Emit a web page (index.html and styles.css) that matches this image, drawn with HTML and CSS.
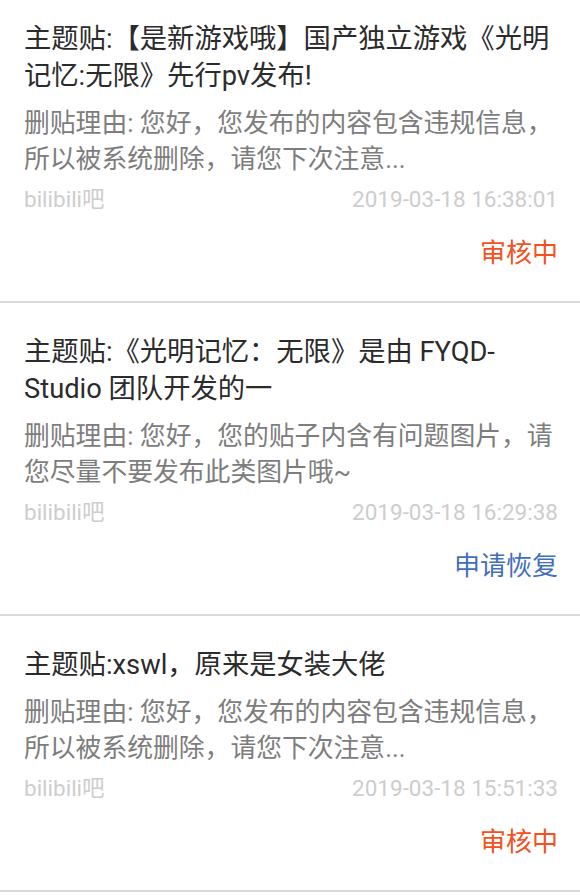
FILE: index.html
```html
<!DOCTYPE html>
<html lang="zh-CN">
<head>
<meta charset="utf-8">
<title>删帖记录</title>
<link rel="stylesheet" href="styles.css">
</head>
<body>
<ul class="list">
  <li class="item">
    <div class="title">主题贴:【是新游戏哦】国产独立游戏《光明记忆:无限》先行pv发布!</div>
    <div class="reason">删贴理由: 您好，您发布的内容包含违规信息，所以被系统删除，请您下次注意...</div>
    <div class="meta"><span>bilibili吧</span><span>2019-03-18 16:38:01</span></div>
    <div class="status pending">审核中</div>
  </li>
  <li class="item">
    <div class="title">主题贴:《光明记忆：无限》是由 FYQD-Studio 团队开发的一</div>
    <div class="reason">删贴理由: 您好，您的贴子内含有问题图片，请您尽量不要发布此类图片哦~</div>
    <div class="meta"><span>bilibili吧</span><span>2019-03-18 16:29:38</span></div>
    <div class="status appeal">申请恢复</div>
  </li>
  <li class="item">
    <div class="title">主题贴:xswl，原来是女装大佬</div>
    <div class="reason">删贴理由: 您好，您发布的内容包含违规信息，所以被系统删除，请您下次注意...</div>
    <div class="meta"><span>bilibili吧</span><span>2019-03-18 15:51:33</span></div>
    <div class="status pending">审核中</div>
  </li>
</ul>
</body>
</html>
```

FILE: styles.css
```css
html, body {
  margin: 0;
  padding: 0;
  background: #ffffff;
}
body {
  font-family: Roboto, "Noto Sans CJK SC", sans-serif;
  width: 580px;
  overflow: hidden;
}
.list {
  list-style: none;
  margin: 0;
  padding: 0;
}
.item {
  padding: 31px 22px 30px 24px;
  border-bottom: 2px solid #d9d9d9;
}
.item:first-child {
  padding-top: 21px;
}
.title {
  font-size: 27.3px;
  line-height: 37px;
  color: #2b2b2b;
}
.reason {
  margin-top: 10px;
  font-size: 25.8px;
  line-height: 36px;
  color: #7d7d7d;
}
.meta {
  margin-top: 7px;
  display: flex;
  justify-content: space-between;
  font-size: 22.5px;
  line-height: 30px;
  color: #cdcdcd;
}
.status {
  margin-top: 21px;
  text-align: right;
  font-size: 26px;
  line-height: 36px;
}
.pending {
  color: #f4511e;
}
.appeal {
  color: #3f6fbd;
}
```
